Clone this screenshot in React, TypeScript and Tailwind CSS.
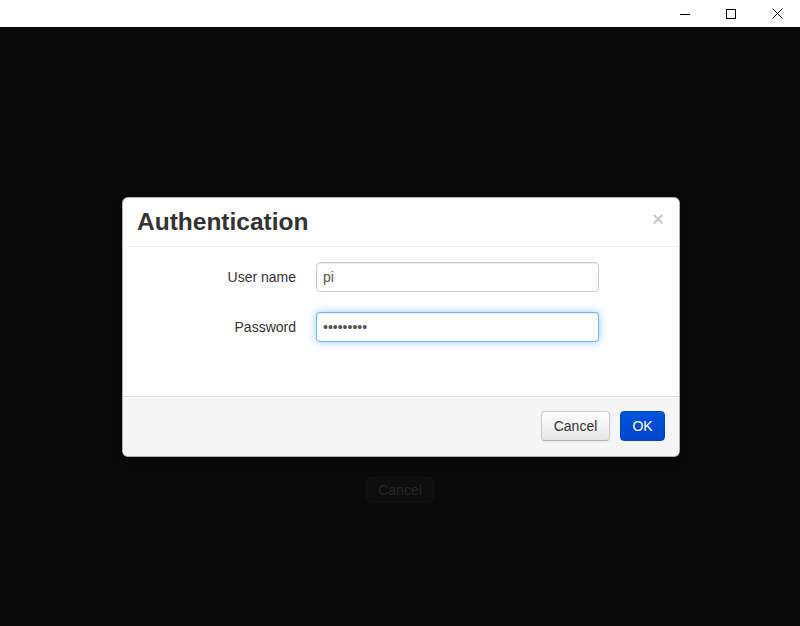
import React from "react";

const font = { fontFamily: '"Liberation Sans", Arial, sans-serif' };

function TitleBar() {
  return (
    <div className="flex h-[27px] shrink-0 justify-end bg-white">
      <div className="flex w-[46px] items-center justify-center">
        <svg width="10" height="10" viewBox="0 0 10 10">
          <path d="M0 5.5h10" stroke="#000" strokeWidth="1" />
        </svg>
      </div>
      <div className="flex w-[46px] items-center justify-center">
        <svg width="10" height="10" viewBox="0 0 10 10">
          <rect x="0.5" y="0.5" width="9" height="9" fill="none" stroke="#000" strokeWidth="1" />
        </svg>
      </div>
      <div className="flex w-[46px] items-center justify-center">
        <svg width="11" height="11" viewBox="0 0 11 11">
          <path d="M0.5 0.5l10 10M10.5 0.5l-10 10" stroke="#000" strokeWidth="1" />
        </svg>
      </div>
    </div>
  );
}

function Field({ label, value, type, focused }: { label: string; value: string; type: string; focused?: boolean }) {
  return (
    <div className="flex">
      <label className="w-[160px] pt-[5px] text-right text-[14px] leading-5 text-[#333]">{label}</label>
      <input
        type={type}
        readOnly
        value={value}
        className={
          "ml-5 h-[30px] w-[283px] rounded-[4px] border bg-white px-[6px] py-1 text-[14px] leading-5 text-[#555] outline-none " +
          (focused
            ? "border-[rgba(82,168,236,0.8)] shadow-[inset_0_1px_1px_rgba(0,0,0,0.075),0_0_8px_rgba(82,168,236,0.6)]"
            : "border-[#ccc] shadow-[inset_0_1px_1px_rgba(0,0,0,0.075)]")
        }
        style={font}
      />
    </div>
  );
}

export default function App() {
  return (
    <div className="flex h-[626px] w-[800px] flex-col overflow-hidden bg-white" style={font}>
      <TitleBar />
      <div className="relative flex-1 bg-[#090909]">
        {/* page content behind the backdrop */}
        <div className="flex flex-col items-center pt-[450px]">
          <button className="h-[26px] w-[68px] rounded-[4px] border border-[#121212] bg-[#0e0e0e] text-[14px] text-[#262626]">
            Cancel
          </button>
        </div>

        <div className="absolute inset-0 flex items-center justify-center pl-[2px] pt-[1px]">
          <div className="w-[558px] rounded-[6px] border border-[rgba(0,0,0,0.3)] bg-white shadow-[0_3px_7px_rgba(0,0,0,0.3)]">
            <div className="flex items-start justify-between border-b border-[#eee] py-[9px] pl-[14px] pr-[15px]">
              <h3 className="text-[24.5px] font-bold leading-[30px] text-[#333]">Authentication</h3>
              <span className="mt-[2px] text-[20px] font-bold leading-5 text-[#000] opacity-20">×</span>
            </div>
            <form className="flex flex-col gap-5 pb-[54px] pl-[13px] pr-[15px] pt-[15px]">
              <Field label="User name" value="pi" type="text" />
              <Field label="Password" value="123456789" type="password" focused />
            </form>
            <div className="flex justify-end gap-[10px] rounded-b-[6px] border-t border-[#ddd] bg-[#f5f5f5] pb-[15px] pl-[15px] pr-[14px] pt-[14px] shadow-[inset_0_1px_0_#fff]">
              <button className="h-[30px] w-[69px] rounded-[4px] border border-[#ccc] border-b-[#b3b3b3] bg-gradient-to-b from-white to-[#e6e6e6] text-[14px] leading-5 text-[#333] shadow-[inset_0_1px_0_rgba(255,255,255,0.2),0_1px_2px_rgba(0,0,0,0.05)]">
                Cancel
              </button>
              <button className="h-[30px] w-[45px] rounded-[4px] border border-[#0044cc] bg-gradient-to-b from-[#0055dd] to-[#0044cc] text-[14px] leading-5 text-white">
                OK
              </button>
            </div>
          </div>
        </div>
      </div>
    </div>
  );
}
